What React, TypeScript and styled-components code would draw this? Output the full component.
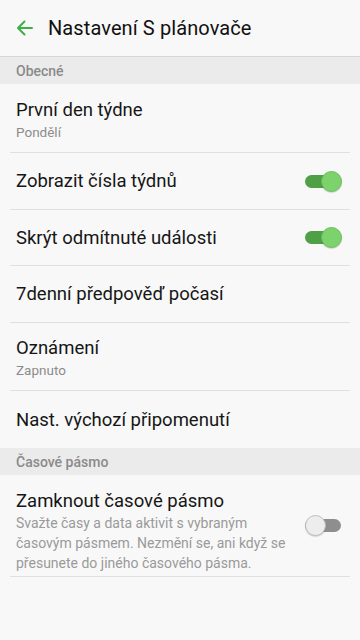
import React from 'react';
import styled, { createGlobalStyle } from 'styled-components';

const Global = createGlobalStyle`
  html, body {
    margin: 0;
    padding: 0;
    background: #f8f8f8;
  }
  * { box-sizing: border-box; }
`;

const Page = styled.div`
  width: 360px;
  min-height: 640px;
  background: #f8f8f8;
  font-family: Roboto, "Noto Sans", sans-serif;
  color: #111;
`;

const Toolbar = styled.div`
  height: 57px;
  display: flex;
  align-items: center;
  padding-left: 14px;
  border-bottom: 1px solid #d6d6d6;
`;

const Back = styled.button`
  border: 0;
  background: none;
  padding: 0;
  width: 22px;
  height: 22px;
  display: flex;
  align-items: center;
  justify-content: center;
  margin-right: 12px;
`;

const Title = styled.h1`
  margin: 0;
  font-size: 20px;
  font-weight: 400;
  letter-spacing: 0.1px;
  color: #111;
`;

const SectionHead = styled.div`
  height: 27px;
  background: #ebebeb;
  display: flex;
  align-items: center;
  padding-left: 16px;
  font-size: 14px;
  font-weight: 500;
  color: #8a8a8a;
`;

const Row = styled.div<{ h: number; top?: number; last?: boolean }>`
  height: ${p => p.h}px;
  margin: 0 10px;
  padding: ${p => (p.top ? `${p.top}px 6px 0` : '0 6px')};
  display: flex;
  align-items: center;
  border-bottom: ${p => (p.last ? 'none' : '1px solid #e0e0e0')};
`;

const Texts = styled.div`
  flex: 1;
  display: flex;
  flex-direction: column;
`;

const TopTexts = styled(Texts)`
  align-self: flex-start;
  padding-top: 14px;
`;

const Label = styled.div`
  font-size: 18.5px;
  line-height: 24px;
  color: #161616;
`;

const Sub = styled.div`
  font-size: 13.5px;
  line-height: 20px;
  color: #8c8c8c;
`;

const Desc = styled.div`
  font-size: 14px;
  line-height: 20px;
  color: #9a9a9a;
`;

const Track = styled.div<{ on: boolean }>`
  position: relative;
  width: 36px;
  height: 13px;
  border-radius: 7px;
  margin-right: 3px;
  flex-shrink: 0;
  background: ${p => (p.on ? '#4f9f47' : '#8e8e8e')};
`;

const Thumb = styled.div<{ on: boolean }>`
  position: absolute;
  top: -4px;
  left: ${p => (p.on ? '16px' : '0')};
  width: 21px;
  height: 21px;
  border-radius: 50%;
  background: ${p => (p.on ? '#7cd26b' : '#ededed')};
  border: 1px solid ${p => (p.on ? '#6cbf5c' : '#bdbdbd')};
  box-shadow: 0 1px 1px rgba(0, 0, 0, 0.15);
`;

const Toggle = ({ on }: { on: boolean }) => (
  <Track on={on}>
    <Thumb on={on} />
  </Track>
);

export default function App() {
  return (
    <Page>
      <Global />
      <Toolbar>
        <Back aria-label="Zpět">
          <svg width="20" height="20" viewBox="0 0 20 20" fill="none">
            <path d="M17 10H3.5M9.5 3.5L3 10l6.5 6.5" stroke="#3cb043" strokeWidth="2" strokeLinecap="round" strokeLinejoin="round" />
          </svg>
        </Back>
        <Title>Nastavení S plánovače</Title>
      </Toolbar>

      <SectionHead>Obecné</SectionHead>
      <Row h={69} top={4}>
        <Texts>
          <Label>První den týdne</Label>
          <Sub>Pondělí</Sub>
        </Texts>
      </Row>
      <Row h={57}>
        <Texts><Label>Zobrazit čísla týdnů</Label></Texts>
        <Toggle on />
      </Row>
      <Row h={56}>
        <Texts><Label>Skrýt odmítnuté události</Label></Texts>
        <Toggle on />
      </Row>
      <Row h={57}>
        <Texts><Label>7denní předpověď počasí</Label></Texts>
      </Row>
      <Row h={68} top={2}>
        <Texts>
          <Label>Oznámení</Label>
          <Sub>Zapnuto</Sub>
        </Texts>
      </Row>
      <Row h={57} last>
        <Texts><Label>Nast. výchozí připomenutí</Label></Texts>
      </Row>

      <SectionHead>Časové pásmo</SectionHead>
      <Row h={102}>
        <TopTexts>
          <Label>Zamknout časové pásmo</Label>
          <Desc>
            Svažte časy a data aktivit s vybraným časovým pásmem. Nezmění se, ani když se přesunete do jiného časového pásma.
          </Desc>
        </TopTexts>
        <Toggle on={false} />
      </Row>
    </Page>
  );
}
